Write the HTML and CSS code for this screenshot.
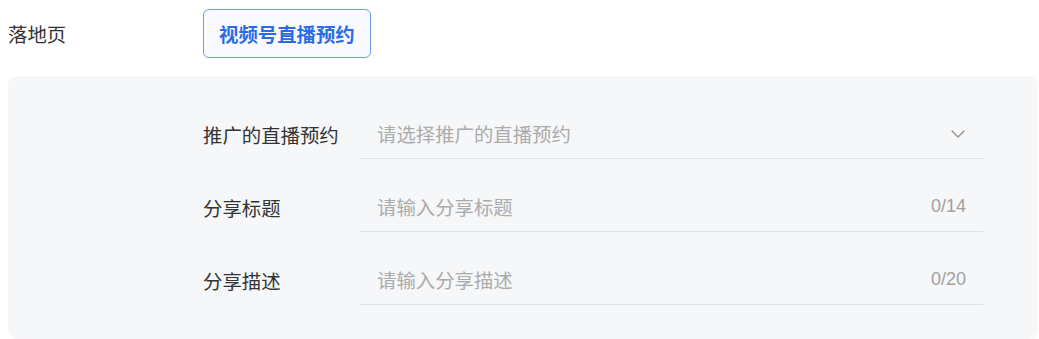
FILE: index.html
```html
<!DOCTYPE html>
<html lang="zh-CN">
<head>
<meta charset="utf-8">
<title>落地页</title>
<link rel="stylesheet" href="styles.css">
</head>
<body>
<div class="page">
  <div class="top-row">
    <div class="top-label">落地页</div>
    <button class="tag-btn" type="button">视频号直播预约</button>
  </div>
  <div class="panel">
    <div class="form-row">
      <div class="form-label">推广的直播预约</div>
      <div class="field">
        <span class="placeholder">请选择推广的直播预约</span>
        <svg class="chevron" width="14" height="8" viewBox="0 0 14 8" aria-hidden="true">
          <path d="M1 1 L7 7 L13 1" fill="none" stroke="#8a8a8a" stroke-width="1.2" stroke-linecap="round" stroke-linejoin="round"/>
        </svg>
      </div>
    </div>
    <div class="form-row">
      <div class="form-label">分享标题</div>
      <div class="field">
        <span class="placeholder">请输入分享标题</span>
        <span class="count">0/14</span>
      </div>
    </div>
    <div class="form-row">
      <div class="form-label">分享描述</div>
      <div class="field">
        <span class="placeholder">请输入分享描述</span>
        <span class="count">0/20</span>
      </div>
    </div>
  </div>
</div>
</body>
</html>
```
FILE: styles.css
```css
html, body {
  margin: 0;
  padding: 0;
  background: #ffffff;
}
body {
  font-family: "Noto Sans CJK SC", "Noto Sans", sans-serif;
  color: #333333;
}
.page {
  padding: 9px 1px 0 8px;
}
.top-row {
  display: flex;
  align-items: center;
  height: 49px;
}
.top-label {
  width: 195px;
  font-size: 19.4px;
  color: #333333;
}
.tag-btn {
  box-sizing: border-box;
  height: 49px;
  padding: 0 15px;
  border: 1px solid #6d9cf4;
  border-radius: 6px;
  background: #f8faff;
  color: #2b6ce6;
  font-family: "Noto Sans CJK SC", "Noto Sans", sans-serif;
  font-size: 19.4px;
  font-weight: 700;
  cursor: pointer;
}
.panel {
  margin-top: 18px;
  background: #f6f7f9;
  border-radius: 9px;
  padding: 34px 0 34px 195px;
  display: flex;
  flex-direction: column;
  gap: 24px;
}
.form-row {
  display: flex;
  align-items: stretch;
}
.form-label {
  width: 156px;
  display: flex;
  align-items: center;
  font-size: 19.4px;
  color: #333333;
}
.field {
  box-sizing: border-box;
  width: 624px;
  height: 49px;
  padding: 0 17px 1px 18px;
  border-bottom: 1px solid #e2e3e6;
  display: flex;
  align-items: center;
  justify-content: space-between;
}
.placeholder {
  font-size: 19.4px;
  color: #ababab;
}
.count {
  font-family: "Liberation Sans", "Noto Sans", sans-serif;
  font-size: 18px;
  color: #a0a0a0;
}
.chevron {
  display: block;
  margin-right: 1px;
}
```
